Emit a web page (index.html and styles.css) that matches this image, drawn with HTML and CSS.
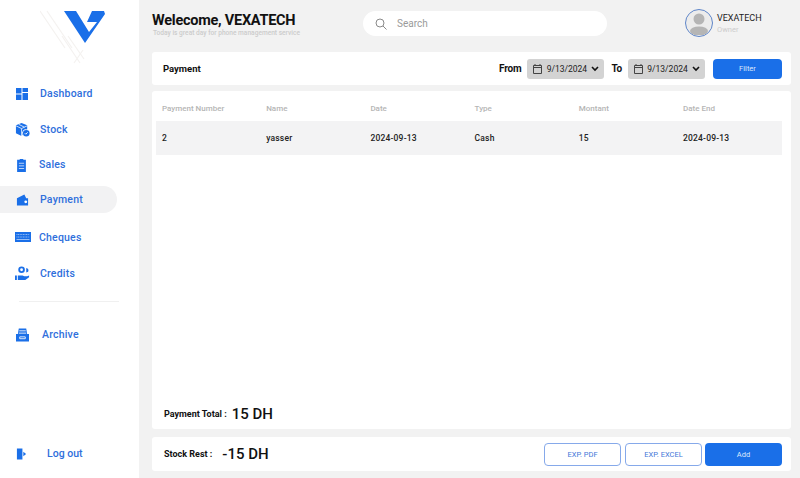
FILE: index.html
```html
<!DOCTYPE html>
<html lang="en">
<head>
<meta charset="utf-8">
<title>Payment</title>
<link rel="stylesheet" href="styles.css">
</head>
<body>
<div class="app">
  <aside class="sidebar">
    <div class="logo">
      <svg width="70" height="56" viewBox="40 10 70 56">
        <g fill="none" stroke="#f4f2f0" stroke-width="1.2">
          <path d="M40 11 L65 48"/><path d="M47 11 L72 48"/><path d="M62 36 L80 63"/><path d="M68 36 L84 59"/><path d="M74 63 L83 50"/>
        </g>
        <path fill="#1a6fe8" d="M64 11H76L89 32L97 22H87L92 11H104L105 14L85 43Z"/>
      </svg>
    </div>
    <nav class="nav">
      <a class="item i-dash"><svg class="ic" viewBox="0 0 12 12"><path fill="#1a6fe8" d="M0 0h5.500v5.500H0zM6.500 0H12v4H6.500zM6.500 5H12v7H6.500zM0 6.500h5.500V12H0z"/></svg><span>Dashboard</span></a>
      <a class="item i-stock"><svg class="ic" viewBox="0 0 16 16"><path fill="#1a6fe8" d="M7 1l6 2.500V8a4 4 0 0 0-5 5.500L7 15l-6-3V3.500z"/><path fill="none" stroke="#fff" stroke-width=".8" d="M1 4l6 3 6-3M7 7v8M4 2.500l6 3"/><circle cx="12" cy="12" r="3.500" fill="#1a6fe8"/><path fill="none" stroke="#fff" d="M10.500 12l1 1 2-2"/></svg><span>Stock</span></a>
      <a class="item i-sales"><svg class="ic" viewBox="0 0 12 16"><path fill="#1a6fe8" d="M1 2h3V1h4v1h3v14H1z"/><path stroke="#fff" stroke-width=".8" d="M3 6h6M3 9h6M3 12h6"/></svg><span>Sales</span></a>
      <a class="item i-pay active"><svg class="ic" viewBox="0 0 14 14"><path fill="#1a6fe8" d="M1 5L9 1l2 4h2v8H1z"/><circle cx="10.500" cy="9" r="1.500" fill="#fff"/></svg><span>Payment</span></a>
      <a class="item i-cheq"><svg class="ic wide" viewBox="0 0 16 10"><path fill="#1a6fe8" d="M0 0h16v10H0z"/><path stroke="#cfe0fb" stroke-width=".7" stroke-dasharray="1 .6" d="M1.500 2.500h13M1.500 5h13"/><path stroke="#cfe0fb" stroke-width=".7" d="M1.500 7.500h13"/></svg><span>Cheques</span></a>
      <a class="item i-cred"><svg class="ic" viewBox="0 0 16 16"><circle cx="7" cy="4" r="3.500" fill="#1a6fe8"/><circle cx="7" cy="4" r="1.500" fill="#fff"/><path fill="#1a6fe8" d="M12 2a3 3 0 0 1 2 4l-2 1zM0 10h2v5H0zM3 10h5l2 1h3l2-1v2l-4 3H3z"/></svg><span>Credits</span></a>
      <hr class="rule">
      <a class="item i-arch"><svg class="ic" viewBox="0 0 14 14"><path fill="#1a6fe8" d="M3 0h8l1 6h2v8H0V6h2z"/><path stroke="#fff" d="M3.500 2.500h7M3 5h8M4 9h6v2H4z" fill="none" stroke-width=".9"/></svg><span>Archive</span></a>
    </nav>
    <a class="item i-out"><svg class="ic" viewBox="0 0 12 14"><path fill="#1a6fe8" d="M1 1h6v12H1z"/><path fill="#1a6fe8" d="M8 4.500l3 2.500-3 2.500z"/></svg><span>Log out</span></a>
  </aside>

  <main class="main">
    <header class="topbar">
      <div class="welcome">
        <h1>Welecome, VEXATECH</h1>
        <p>Today is great day for phone management service</p>
      </div>
      <div class="search">
        <svg width="12" height="12" viewBox="0 0 12 12"><circle cx="5" cy="5" r="4" fill="none" stroke="#8a8a8a"/><path stroke="#8a8a8a" d="M8 8l3.500 3.500"/></svg>
        <span>Search</span>
      </div>
      <div class="user">
        <div class="avatar"><svg width="24" height="24" viewBox="0 0 24 24"><circle cx="12" cy="8" r="5.500" fill="#b5b5b5"/><ellipse cx="12" cy="20" rx="9" ry="4.500" fill="#b5b5b5"/></svg></div>
        <div class="who"><strong>VEXATECH</strong><small>Owner</small></div>
      </div>
    </header>

    <section class="card toolbar">
      <h2>Payment</h2>
      <div class="filters">
        <label>From</label>
        <div class="date"><svg width="9" height="10" viewBox="0 0 9 10"><path fill="none" stroke="#444" d="M.5 1.500h8v8h-8zM.5 3.500h8M2 0v2M7 0v2"/></svg><span>9/13/2024</span><svg width="8" height="6" viewBox="0 0 8 6"><path fill="none" stroke="#111" stroke-width="1.600" d="M1 1l3 3 3-3"/></svg></div>
        <label class="to">To</label>
        <div class="date"><svg width="9" height="10" viewBox="0 0 9 10"><path fill="none" stroke="#444" d="M.5 1.500h8v8h-8zM.5 3.500h8M2 0v2M7 0v2"/></svg><span>9/13/2024</span><svg width="8" height="6" viewBox="0 0 8 6"><path fill="none" stroke="#111" stroke-width="1.600" d="M1 1l3 3 3-3"/></svg></div>
        <button class="btn primary filter">Filter</button>
      </div>
    </section>

    <section class="card tablecard">
      <div class="grid head">
        <span>Payment Number</span><span>Name</span><span>Date</span><span>Type</span><span>Montant</span><span>Date End</span>
      </div>
      <div class="grid row">
        <span>2</span><span>yasser</span><span>2024-09-13</span><span>Cash</span><span>15</span><span>2024-09-13</span>
      </div>
      <div class="total"><b>Payment Total :</b><em>15 DH</em></div>
    </section>

    <section class="card footer">
      <div class="rest"><b>Stock Rest :</b><em>-15 DH</em></div>
      <div class="actions">
        <button class="btn outline">EXP. PDF</button>
        <button class="btn outline">EXP. EXCEL</button>
        <button class="btn primary">Add</button>
      </div>
    </section>
  </main>
</div>
</body>
</html>
```
FILE: styles.css
```css
* { box-sizing: border-box; }
html, body { margin: 0; height: 100%; }
body { font-family: Roboto, "Liberation Sans", sans-serif; background: #f2f2f2; color: #111; overflow: hidden; }
.app { display: flex; width: 800px; height: 478px; }

.sidebar { flex: none; width: 139px; background: #fff; display: flex; flex-direction: column; padding-top: 10px; }
.logo { height: 56px; padding-left: 40px; line-height: 0; }
.nav { display: flex; flex-direction: column; margin-top: 10px; }
.item { display: flex; align-items: center; height: 35px; width: 117px; padding-left: 16px; color: #2f6fdc; font-size: 10.5px; font-weight: 500; letter-spacing: .2px; border-radius: 0 14px 14px 0; }
.ic { width: 13px; height: 14px; flex: none; margin-right: 11px; }
.ic.wide { width: 16px; height: 10px; }
.i-dash .ic { width: 12px; height: 12px; margin-right: 12px; }
.active { background: #f2f2f3; height: 27px; margin: 5px 0 4px; }
.i-stock { height: 37px; padding-left: 15px; }
.i-stock .ic { width: 15px; height: 15px; margin-right: 10px; }
.i-sales { height: 33px; padding-left: 16px; }
.i-sales .ic { width: 11px; margin-right: 12px; }
.i-cheq { padding-left: 15px; height: 40px; }
.i-cheq .ic { margin-right: 8px; }
.i-cred { padding-left: 15px; height: 32px; }
.i-cred .ic { width: 15px; height: 15px; margin-right: 10px; }
.rule { width: 100px; margin: 12px 0 0 19px; border: 0; border-top: 1px solid #f0f0f0; }
.i-arch { margin-top: 15px; padding-left: 16px; }
.i-arch .ic { margin-right: 13px; }
.i-out { margin-top: auto; margin-bottom: 7px; padding-left: 16px; }
.i-out .ic { width: 11px; margin-right: 20px; }
.i-out span { letter-spacing: 0; }

.main { flex: 1; min-width: 0; padding: 0 9px 7px 13px; display: flex; flex-direction: column; }
.topbar { height: 52px; display: flex; align-items: flex-start; }
.welcome { width: 211px; padding-top: 13px; }
.welcome h1 { margin: 0; font-size: 14.5px; line-height: 16px; font-weight: 700; letter-spacing: -.25px; color: #111; white-space: nowrap; }
.welcome p { margin: 0; font-size: 6.6px; line-height: 8px; color: #ccc; font-weight: 500; white-space: nowrap; padding-left: 1px; }
.search { margin-top: 11px; width: 244px; height: 25px; background: #fff; border-radius: 13px; display: flex; align-items: center; gap: 10px; padding-left: 12px; font-size: 10px; color: #9a9a9a; }
.user { margin: 9px 0 0 78px; display: flex; align-items: center; gap: 4px; }
.avatar { width: 28px; height: 28px; border-radius: 50%; border: 1px solid #5f86c9; background: #ececec; display: flex; align-items: center; justify-content: center; overflow: hidden; }
.who { display: flex; flex-direction: column; }
.who strong { font-size: 9px; line-height: 12px; font-weight: 400; color: #222; }
.who small { font-size: 7.5px; line-height: 11px; color: #ccc; }

.card { background: #fff; border-radius: 3px; }
.toolbar { height: 33px; display: flex; align-items: center; justify-content: space-between; padding: 0 9px 0 11px; }
.toolbar h2 { margin: 0; font-size: 9.5px; font-weight: 700; color: #111; }
.filters { display: flex; align-items: center; }
.filters label { font-size: 10px; font-weight: 700; margin-right: 6px; letter-spacing: -.2px; }
.filters label.to { margin-left: 7px; margin-right: 6px; }
.date { width: 77px; height: 20px; background: #d3d3d3; border-radius: 3px; display: flex; align-items: center; justify-content: space-between; padding: 0 5px 0 6px; font-size: 8.5px; color: #222; }
.btn { font-family: inherit; border-radius: 4px; font-size: 7.5px; cursor: pointer; }
.primary { background: #1a6fe8; color: #dce9fc; border: 0; }
.outline { background: #fff; color: #3f76d8; border: 1px solid #86a9ea; }
.filter { width: 69px; height: 20px; margin-left: 8px; }

.tablecard { flex: 1; margin-top: 6px; padding: 0 9px 0 4px; display: flex; flex-direction: column; }
.grid { display: grid; grid-template-columns: repeat(5, 104.2px) 1fr; padding-left: 6px; align-items: center; }
.head { height: 30px; padding-top: 4px; font-size: 8px; font-weight: 500; color: #b5b5b5; }
.row { height: 34px; background: #f3f3f4; font-size: 8.5px; font-weight: 500; color: #222; letter-spacing: .2px; }
.total { margin-top: auto; height: 30px; padding-left: 8px; display: flex; align-items: center; gap: 5px; }
.total b, .rest b { font-size: 9px; font-weight: 700; }
.total em, .rest em { font-style: normal; font-size: 15px; font-weight: 500; color: #111; }
.rest em { margin-left: 6px; }

.footer { height: 34px; margin-top: 8px; display: flex; align-items: center; justify-content: space-between; padding: 0 9px 0 12px; }
.rest { display: flex; align-items: center; gap: 4px; }
.actions { display: flex; gap: 4px; }
.actions .btn { width: 77px; height: 23px; }
.actions .btn.outline:first-child { margin-left: 1px; }
.actions .btn.primary { margin-left: -1px; }
```
